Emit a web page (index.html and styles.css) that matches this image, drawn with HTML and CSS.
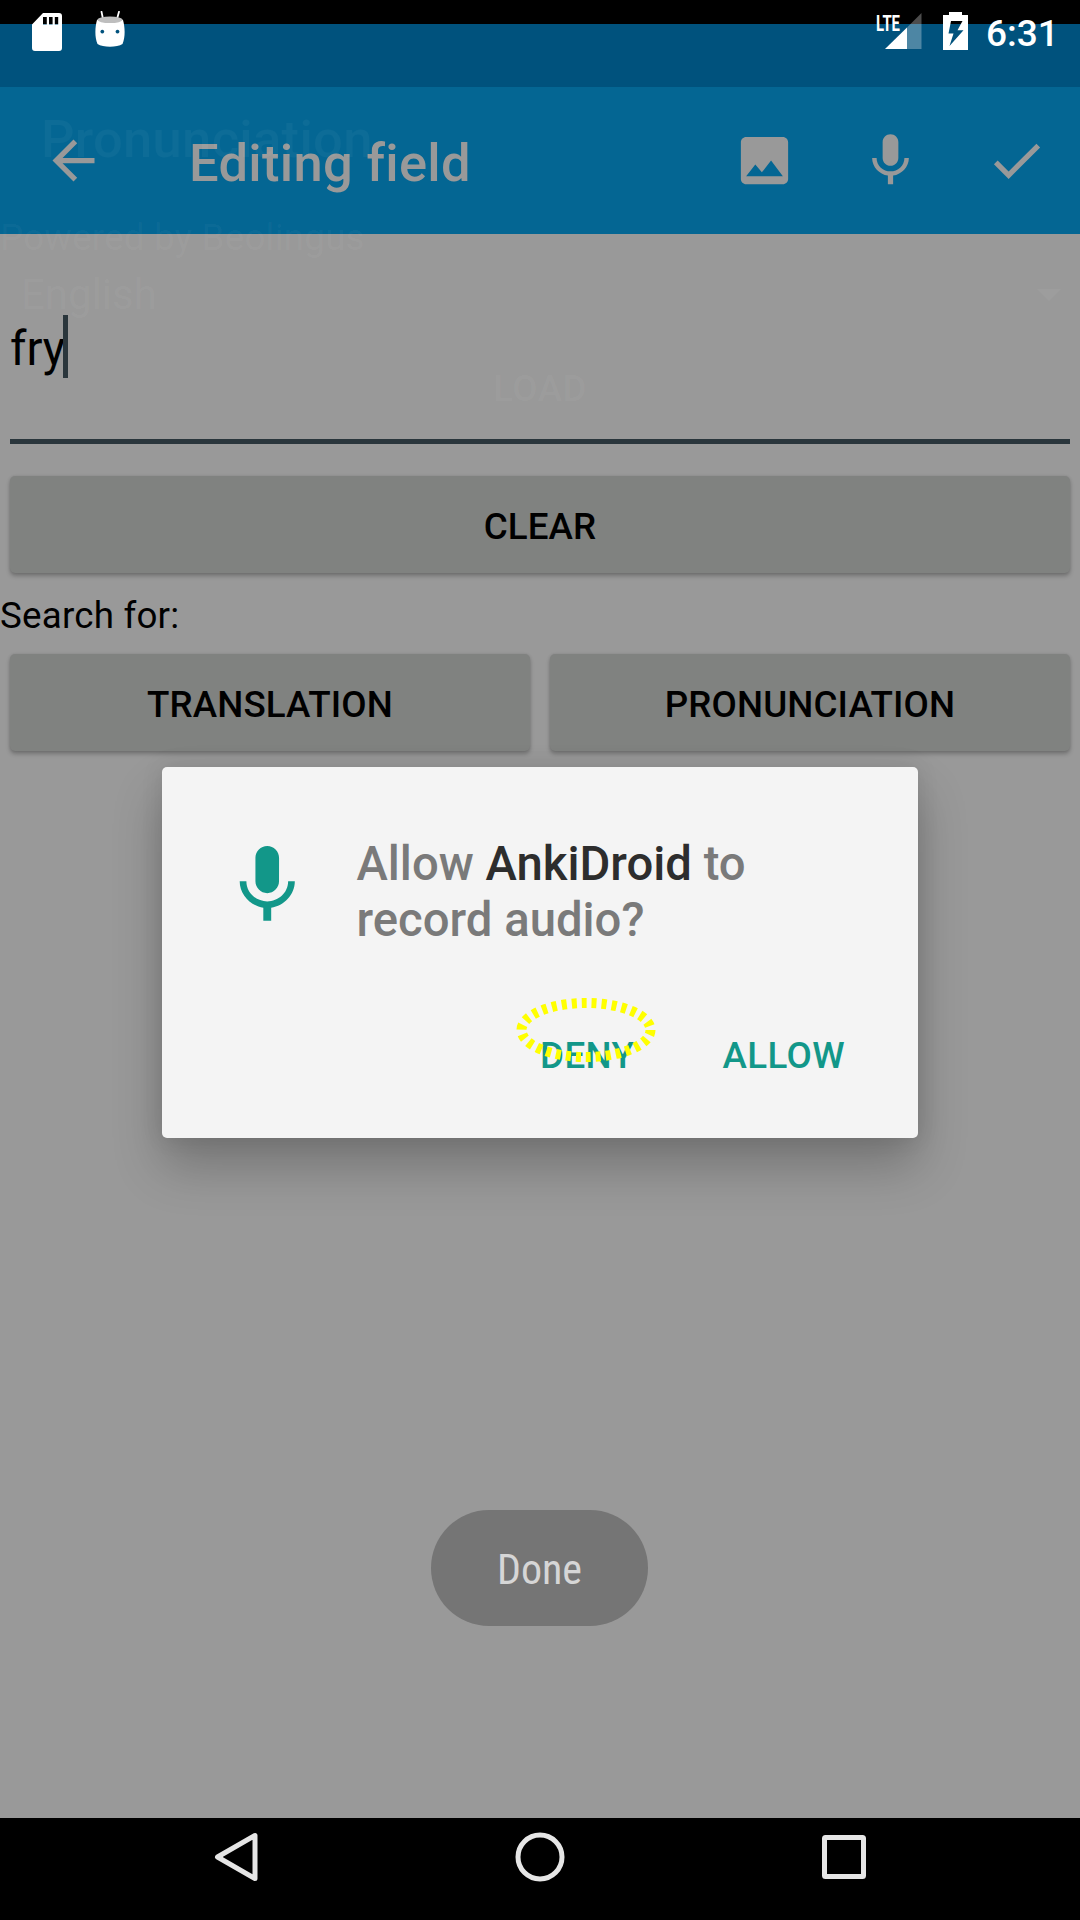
FILE: index.html
```html
<!DOCTYPE html>
<html lang="en">
<head>
<meta charset="utf-8">
<title>Editing field</title>
<link rel="stylesheet" href="styles.css">
</head>
<body>
<div class="screen">
  <header class="status">
    <svg class="status-sd" viewBox="0 0 30 38"><path fill="#fff" fill-rule="evenodd" d="M11 0H27a3 3 0 0 1 3 3V35a3 3 0 0 1-3 3H3a3 3 0 0 1-3-3V11.500ZM11 4V11.500H14.800V4ZM17 4V11.500H20.600V4ZM22.800 4V11.500H26.200V4Z"/></svg>
    <svg class="status-droid" viewBox="0 0 30 36"><path d="M6.500.8 8 8M24 .8 22 8" stroke="#fff" stroke-width="1.800" stroke-linecap="round"/><path fill="#fff" fill-rule="evenodd" d="M2 9C8 6 22 6 28 9C30 16 30.500 26 27.500 33C22 36.500 8 36.500 2.500 33C-.5 26 0 16 2 9ZM7.300 18.700a1.900 1.900 0 1 0 .01 0ZM22.500 18.700a1.900 1.900 0 1 0 .01 0Z"/><ellipse cx="15" cy="8.800" rx="12.500" ry="3.300" fill="#bebebe"/></svg>
    <span class="status-space"></span>
    <span class="lte">LTE</span>
    <svg class="status-signal" viewBox="0 0 37 36"><path fill="#fff" fill-opacity=".3" d="M22 14.500 36.500 0V36H22Z"/><path fill="#fff" d="M0 36 22 14.500V36Z"/></svg>
    <svg class="status-battery" viewBox="0 0 25 38"><path fill="#fff" fill-rule="evenodd" d="M6 0H19V3H25V38H0V3H6ZM8 9 5.500 21.500H10.500L6.500 34 20.500 18.300H14.500L19.500 9Z"/></svg>
    <span class="clock">6:31</span>
  </header>

  <div class="appbar">
    <svg class="icon" viewBox="0 0 24 24"><path d="M20 11H7.830l5.590-5.590L12 4l-8 8 8 8 1.410-1.410L7.830 13H20v-2z"/></svg>
    <h1 class="title">Editing field</h1>
    <div class="actions">
      <svg class="icon" viewBox="0 0 24 24"><path d="M21 19V5c0-1.100-.9-2-2-2H5c-1.100 0-2 .9-2 2v14c0 1.100.9 2 2 2h14c1.100 0 2-.9 2-2zM8.500 13.500l2.500 3.010L14.500 12l4.500 6H5l3.500-4.500z"/></svg>
      <svg class="icon" viewBox="0 0 24 24"><path d="M12 14c1.660 0 2.990-1.340 2.990-3L15 5c0-1.660-1.340-3-3-3S9 3.340 9 5v6c0 1.660 1.340 3 3 3zm5.300-3c0 3-2.540 5.100-5.300 5.100S6.700 14 6.700 11H5c0 3.410 2.720 6.230 6 6.720V21h2v-3.280c3.280-.48 6-3.300 6-6.720h-1.700z"/></svg>
      <svg class="icon" viewBox="0 0 24 24"><path d="M9 16.170L4.830 12l-1.420 1.410L9 19 21 7l-1.410-1.410z"/></svg>
    </div>
  </div>

  <main class="content">
    <div class="field"><span class="field-text">fry</span><span class="caret"></span></div>
    <div class="btn btn-clear">CLEAR</div>
    <p class="label">Search for:</p>
    <div class="row">
      <div class="btn">TRANSLATION</div>
      <div class="btn">PRONUNCIATION</div>
    </div>
  </main>

  <nav class="navbar">
    <svg viewBox="0 0 60 60"><path d="M45 8.500V51.500L7.500 30Z" stroke-linejoin="round"/></svg>
    <svg viewBox="0 0 60 60"><circle cx="30" cy="30" r="22"/></svg>
    <svg viewBox="0 0 60 60"><rect x="10.500" y="10.500" width="39" height="39" rx="1"/></svg>
  </nav>

  <div class="ghost">
    <div class="ghost-title">Pronunciation</div>
    <div class="ghost-powered">Powered by Beolingus</div>
    <div class="ghost-spinner"><span>English</span><i class="ghost-arrow"></i></div>
    <div class="ghost-load">LOAD</div>
  </div>

  <div class="toast">Done</div>

  <section class="dialog">
    <div class="dialog-body">
      <svg class="dialog-mic" viewBox="0 0 24 24"><path d="M12 14c1.660 0 2.990-1.340 2.990-3L15 5c0-1.660-1.340-3-3-3S9 3.340 9 5v6c0 1.660 1.340 3 3 3zm5.300-3c0 3-2.540 5.100-5.300 5.100S6.700 14 6.700 11H5c0 3.410 2.720 6.230 6 6.720V21h2v-3.280c3.280-.48 6-3.300 6-6.720h-1.700z"/></svg>
      <p class="dialog-text">Allow <b>AnkiDroid</b> to<br>record audio?</p>
    </div>
    <div class="dialog-actions">
      <span class="deny">DENY<svg class="marker" viewBox="0 0 140 66"><ellipse cx="70" cy="33" rx="64.500" ry="27"/></svg></span>
      <span>ALLOW</span>
    </div>
  </section>
</div>
</body>
</html>
```
FILE: styles.css
```css
* { box-sizing: border-box; margin: 0; padding: 0; }
body { width: 1080px; height: 1920px; overflow: hidden; font-family: Roboto, sans-serif; }
svg { display: block; flex: none; }

.screen {
  position: relative;
  display: flex;
  flex-direction: column;
  width: 1080px;
  height: 1920px;
  background: #999;
  color: #000;
  font-size: 36.75px;
  white-space: nowrap;
}

/* Status bar */
.status {
  display: flex;
  align-items: flex-start;
  height: 87px;
  padding: 11px 26px 0 32px;
  background: linear-gradient(#000 24px, #00527d 24px);
  color: #fff;
}
.status-sd { width: 30px; height: 38px; margin-top: 2px; }
.status-droid { width: 30px; height: 36px; margin-left: 33px; }
.status-space { flex: 1; }
.lte {
  width: 9px;
  margin-top: 1px;
  font: 700 22.5px/22px Roboto, sans-serif;
  transform: scaleX(.66);
  transform-origin: 0 0;
}
.status-signal { width: 37px; height: 36px; margin: 2px 21px 0 0; }
.status-battery { width: 25px; height: 38px; margin: 1px 18px 0 0; }
.clock { width: 68px; margin-top: 1px; font-size: 37px; font-weight: 500; line-height: 43px; }

/* App bar */
.appbar {
  display: flex;
  align-items: center;
  height: 147px;
  padding: 0 32px 0 42px;
  background: #046693;
  color: #999;
}
.icon { width: 63px; height: 63px; fill: #999; }
.title {
  flex: 1;
  margin: 4px 0 0 84px;
  font-size: 52.5px;
  font-weight: 500;
  line-height: 62px;
  letter-spacing: .3px;
  font-variant-ligatures: common-ligatures;
}
.actions { display: flex; gap: 63px; }

/* Form */
.content { flex: 1; padding: 81px 10px 0; }
.field {
  display: flex;
  align-items: flex-start;
  height: 129px;
  border-bottom: 5px solid #2a363c;
}
.field-text { width: 53px; font-size: 47.25px; line-height: 68px; }
.caret { width: 5px; height: 63px; background: #2a363c; }
.btn {
  flex: 1;
  height: 97px;
  border-radius: 5px;
  background: #808280;
  box-shadow: 0 3px 4px rgba(0, 0, 0, .25), 0 0 3px rgba(0, 0, 0, .1);
  font-weight: 500;
  line-height: 101px;
  text-align: center;
  letter-spacing: .1px;
}
.btn-clear { margin-top: 32px; }
.label { margin: 21px -10px 0; height: 60px; line-height: 43px; letter-spacing: .2px; }
.row { display: flex; gap: 20px; }

/* Navigation bar */
.navbar {
  display: flex;
  justify-content: space-between;
  height: 102px;
  padding: 9px 206px 0 210px;
  background: #000;
}
.navbar svg { width: 60px; height: 60px; fill: none; stroke: #e6e6e6; stroke-width: 5; }
.navbar svg:nth-child(2) { margin-left: -4px; }

/* Fading previous screen */
.ghost {
  position: absolute;
  inset: 0 0 auto;
  display: flex;
  flex-direction: column;
  padding-top: 108px;
  color: rgba(255, 255, 255, .04);
}
.ghost-title { padding-left: 41px; font-size: 52.5px; font-weight: 500; line-height: 62px; letter-spacing: .3px; }
.ghost-powered { margin-top: 46px; line-height: 43px; letter-spacing: .2px; }
.ghost-spinner {
  display: flex;
  align-items: center;
  justify-content: space-between;
  margin-top: 11px;
  padding: 0 19px 0 21px;
  font-size: 42px;
  line-height: 49px;
}
.ghost-arrow { border: 12px solid transparent; border-top-color: rgba(255, 255, 255, .04); border-bottom: 0; }
.ghost-load { margin-top: 48px; font-weight: 500; line-height: 43px; text-align: center; letter-spacing: .4px; }

/* Toast */
.toast {
  position: absolute;
  left: 431px;
  top: 1510px;
  width: 217px;
  height: 116px;
  border-radius: 58px;
  background: #757575;
  color: #d6d6d6;
  font-family: "Roboto Condensed", Roboto, sans-serif;
  font-size: 42px;
  font-stretch: condensed;
  line-height: 120px;
  text-align: center;
}

/* Permission dialog */
.dialog {
  position: absolute;
  left: 162px;
  top: 767px;
  width: 756px;
  height: 371px;
  padding: 69px 73px 0 58px;
  border-radius: 5px;
  background: #f4f4f4;
  box-shadow: 0 28px 50px rgba(0, 0, 0, .24), 0 0 22px rgba(0, 0, 0, .1);
}
.dialog-body { display: flex; gap: 42px; }
.dialog-mic { width: 94.5px; height: 94.5px; margin-top: 2px; fill: #129789; }
.dialog-text { color: #7a7a7a; font-size: 47.25px; font-weight: 500; line-height: 56px; }
.dialog-text b { color: #2d2d2d; font-weight: 500; }
.dialog-actions {
  display: flex;
  justify-content: flex-end;
  gap: 88px;
  margin-top: 86px;
  color: #129789;
  font-weight: 500;
  line-height: 43px;
  letter-spacing: .4px;
}
.deny { position: relative; }
.marker {
  position: absolute;
  left: -24px;
  top: -37px;
  width: 140px;
  height: 66px;
  fill: none;
  stroke: #ff0;
  stroke-width: 10;
  stroke-dasharray: 5 5;
}
```
